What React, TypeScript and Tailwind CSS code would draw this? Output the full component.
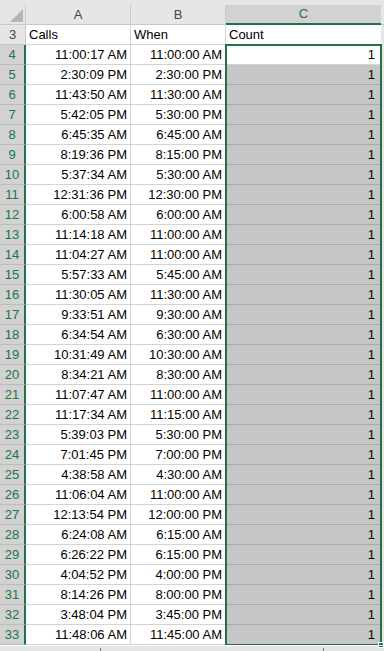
import React from 'react';

const rows: [string, string][] = [
    ['11:00:17 AM', '11:00:00 AM'],
    ['2:30:09 PM', '2:30:00 PM'],
    ['11:43:50 AM', '11:30:00 AM'],
    ['5:42:05 PM', '5:30:00 PM'],
    ['6:45:35 AM', '6:45:00 AM'],
    ['8:19:36 PM', '8:15:00 PM'],
    ['5:37:34 AM', '5:30:00 AM'],
    ['12:31:36 PM', '12:30:00 PM'],
    ['6:00:58 AM', '6:00:00 AM'],
    ['11:14:18 AM', '11:00:00 AM'],
    ['11:04:27 AM', '11:00:00 AM'],
    ['5:57:33 AM', '5:45:00 AM'],
    ['11:30:05 AM', '11:30:00 AM'],
    ['9:33:51 AM', '9:30:00 AM'],
    ['6:34:54 AM', '6:30:00 AM'],
    ['10:31:49 AM', '10:30:00 AM'],
    ['8:34:21 AM', '8:30:00 AM'],
    ['11:07:47 AM', '11:00:00 AM'],
    ['11:17:34 AM', '11:15:00 AM'],
    ['5:39:03 PM', '5:30:00 PM'],
    ['7:01:45 PM', '7:00:00 PM'],
    ['4:38:58 AM', '4:30:00 AM'],
    ['11:06:04 AM', '11:00:00 AM'],
    ['12:13:54 PM', '12:00:00 PM'],
    ['6:24:08 AM', '6:15:00 AM'],
    ['6:26:22 PM', '6:15:00 PM'],
    ['4:04:52 PM', '4:00:00 PM'],
    ['8:14:26 PM', '8:00:00 PM'],
    ['3:48:04 PM', '3:45:00 PM'],
    ['11:48:06 AM', '11:45:00 AM'],
];

const App = () => {
    return (
        <div className="w-[384px] h-[651px] overflow-hidden bg-[#e6e6e6] font-['Liberation_Sans',Arial,sans-serif] text-[13px] text-black">
            <div className="h-[5px]"></div>

            {/* column headers */}
            <div className="flex h-[20px] text-[#444]">
                <div className="relative w-[26px] border-r border-b border-[#c8c8c8]">
                    <svg className="absolute right-[2px] bottom-[2px]" width="13" height="13" viewBox="0 0 13 13">
                        <polygon points="13,0 13,13 0,13" fill="#b4b4b4" />
                    </svg>
                </div>
                <div className="w-[105px] flex items-center justify-center border-r border-b border-[#c8c8c8]">A</div>
                <div className="w-[95px] flex items-center justify-center border-r border-b border-[#c8c8c8]">B</div>
                <div className="w-[155px] flex items-center justify-center bg-[#d2d2d2] text-[#217346] border-b-2 border-[#217346]">C</div>
                <div className="flex-1 border-b border-[#c8c8c8]"></div>
            </div>

            <div className="relative">
                {/* row 3 */}
                <div className="flex h-[20px]">
                    <div className="w-[26px] flex items-center justify-center text-[#444] border-r border-b border-[#c8c8c8]">3</div>
                    <div className="w-[105px] bg-white flex items-center pl-[3px] border-r border-b border-[#d4d4d4]">Calls</div>
                    <div className="w-[95px] bg-white flex items-center pl-[3px] border-r border-b border-[#d4d4d4]">When</div>
                    <div className="w-[155px] bg-white flex items-center pl-[3px] border-b border-[#d4d4d4]">Count</div>
                    <div className="flex-1"></div>
                </div>

                {rows.map(([calls, when], i) => (
                    <div key={i} className="flex h-[20px]">
                        <div className="w-[26px] flex items-center justify-center bg-[#d2d2d2] text-[#217346] border-b border-[#bcbcbc] border-r-2 border-r-[#217346]">
                            {i + 4}
                        </div>
                        <div className="w-[105px] bg-white flex items-center justify-end pr-[3px] border-r border-b border-[#d4d4d4]">
                            {calls}
                        </div>
                        <div className="w-[95px] bg-white flex items-center justify-end pr-[3px] border-r border-b border-[#d4d4d4]">
                            {when}
                        </div>
                        <div
                            className={
                                i === 0
                                    ? 'w-[155px] bg-white flex items-center justify-end pr-[6px] border-b border-[#d4d4d4]'
                                    : 'w-[155px] bg-[#c6c6c6] flex items-center justify-end pr-[6px] border-b border-[#a9a9a9]'
                            }
                        >
                            1
                        </div>
                        <div className="flex-1"></div>
                    </div>
                ))}

                {/* selection outline C4:C33 */}
                <div className="absolute left-[225px] top-[19px] w-[157px] h-[602px] border-2 border-[#217346] pointer-events-none">
                    <div className="absolute right-[-4px] bottom-[-4px] w-[6px] h-[6px] bg-[#217346] border border-white"></div>
                </div>
            </div>

            {/* bottom strip */}
            <div className="relative h-[6px] border-t border-white">
                <div className="absolute left-[100px] top-[2px] w-px h-[4px] bg-[#777]"></div>
                <div className="absolute left-[323px] top-[2px] w-px h-[4px] bg-[#777]"></div>
            </div>
        </div>
    );
};

export default App;
